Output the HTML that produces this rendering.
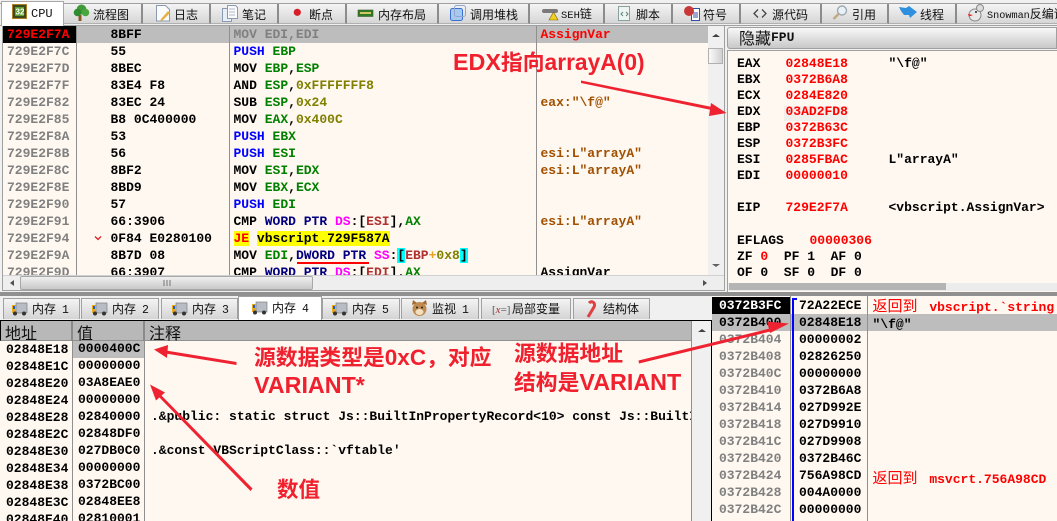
<!DOCTYPE html>
<html><head><meta charset="utf-8"><style>
html,body{margin:0;padding:0}
body{width:1057px;height:521px;overflow:hidden;position:relative;background:#f0f0f0;font-family:"Liberation Mono","WenQuanYi Zen Hei",monospace}
div{position:absolute;box-sizing:border-box}
svg{position:absolute;overflow:visible}
pre{position:absolute;margin:0;font:bold 13px/17px "Liberation Mono",monospace;white-space:pre;color:#000}
.tab{top:4px;height:20px;background:linear-gradient(#f4f4f4,#d6d6d6);border-right:2px solid #8c8c8c;border-bottom:1px solid #b0b0b0}
.btab{top:298px;height:21px;background:linear-gradient(#f4f4f4,#d4d4d4);border:1px solid #a0a0a0;border-bottom:0}
.l{position:absolute;white-space:pre;font:12px/18px "Liberation Mono","WenQuanYi Zen Hei","Noto Sans CJK SC",monospace;color:#111}
.l i{font-style:normal;margin-left:6px;font-size:11.5px}
.h{position:absolute;white-space:pre;font:16px/20px "WenQuanYi Zen Hei","Noto Sans CJK SC",sans-serif;color:#111}
.a{position:absolute;white-space:pre;font:bold 21.8px/28px "Liberation Sans","Noto Sans CJK SC",sans-serif;color:#f0202e}
.a b{font-size:23.3px}
.g{color:#808080}.b{color:#0000ff}.n{color:#008000}.o{color:#808000}.m{color:#ff00ff}.r{color:#b03030}.d{color:#000080}.c{color:#a05000}.e{color:#ff0000}
.cy{background:#00ffff}.y{background:#ffff00}
.cjk{font:15px/17px "WenQuanYi Zen Hei","Noto Sans CJK SC",sans-serif;color:#ff0000;margin-right:4px}
</style></head><body>

<!-- top tab strip -->
<div style="left:0;top:3px;width:1057px;height:1px;background:#a0a0a0"></div>
<div style="left:0;top:25px;width:1057px;height:1px;background:#a0a0a0"></div>
<div class="tab" style="left:64px;width:79px"></div>
<div class="tab" style="left:143px;width:68px"></div>
<div class="tab" style="left:211px;width:68px"></div>
<div class="tab" style="left:279px;width:68px"></div>
<div class="tab" style="left:347px;width:92px"></div>
<div class="tab" style="left:439px;width:91px"></div>
<div class="tab" style="left:530px;width:75px"></div>
<div class="tab" style="left:605px;width:68px"></div>
<div class="tab" style="left:673px;width:68px"></div>
<div class="tab" style="left:741px;width:81px"></div>
<div class="tab" style="left:822px;width:67px"></div>
<div class="tab" style="left:889px;width:68px"></div>
<div class="tab" style="left:957px;width:100px;border-right:0"></div>
<div style="left:1px;top:1px;width:63px;height:25px;background:#fff;border:1px solid #a8a8a8;border-bottom:0"></div>

<span class="l" style="left:31px;top:5px">CPU</span>
<span class="l" style="left:93px;top:7px">流程图</span>
<span class="l" style="left:174px;top:7px">日志</span>
<span class="l" style="left:242px;top:7px">笔记</span>
<span class="l" style="left:309px;top:7px">断点</span>
<span class="l" style="left:378px;top:7px">内存布局</span>
<span class="l" style="left:470px;top:7px">调用堆栈</span>
<span class="l" style="left:561px;top:6px"><span style="font-size:10.5px">SEH</span>链</span>
<span class="l" style="left:636px;top:7px">脚本</span>
<span class="l" style="left:703px;top:7px">符号</span>
<span class="l" style="left:772px;top:7px">源代码</span>
<span class="l" style="left:852px;top:7px">引用</span>
<span class="l" style="left:920px;top:7px">线程</span>
<span class="l" style="left:987px;top:6px"><span style="font-size:10.2px">Snowman</span>反编译</span>

<!-- top icons -->
<svg style="left:0;top:0" width="1057" height="26" viewBox="0 0 1057 26">
<rect x="12.5" y="4.5" width="14" height="14" fill="#3a4a20" stroke="#b08020"/><rect x="15" y="7" width="9" height="9" fill="#60a030"/>
<text x="15.5" y="14.5" font-size="8" font-weight="bold" fill="#fff" font-family="Liberation Sans">32</text>
<path d="M80 21v-6" stroke="#8a5a20" stroke-width="3"/><circle cx="81.5" cy="9.5" r="5" fill="#3f9a3a"/><circle cx="77.5" cy="12.5" r="3.8" fill="#2f8a30"/><circle cx="85.5" cy="12.5" r="3.8" fill="#4aa63f"/>
<path d="M156.5 5.5h9l4 4v11.5h-13z" fill="#fbfbfb" stroke="#8a9ab0"/><path d="M161 19l7-8 2 2-7 7-3 1z" fill="#e8b040"/>
<path d="M222.5 8.5h9v13h-9z" fill="#e8eef5" stroke="#8a9ab0"/><path d="M227.5 5.5h8l2 2v11h-10z" fill="#fbfbfb" stroke="#8a9ab0"/><path d="M229 9h6m-6 3h6m-6 3h6" stroke="#b0b8c8"/>
<circle cx="297.3" cy="12.3" r="3.6" fill="#d81e28"/>
<rect x="358" y="10" width="15" height="6.5" fill="#2f7a2a" stroke="#3d5a2a" stroke-width=".6"/><path d="M360 12h11v2h-11z" fill="#d0c860"/>
<rect x="450.5" y="8.5" width="12" height="12" fill="#a8c8f0" stroke="#3a70d0" rx="2"/><rect x="454.5" y="5.5" width="11" height="11" fill="none" stroke="#90a8d0" rx="2"/>
<path d="M544 11h12" stroke="#7a7a7a" stroke-width="4" stroke-linecap="round"/><path d="M549 20l4.500-8 4.500 8z" fill="#f0d020" stroke="#806000" stroke-width=".6"/>
<path d="M618.5 6.5h11v14h-11z" fill="#eef4f0" stroke="#8aa0a0"/><path d="M623 12l-2 2 2 2m3-4l2 2-2 2" stroke="#608080" fill="none"/>
<path d="M691.5 8.5h8v12h-8z" fill="#fff" stroke="#3050a0"/><path d="M693 13h5m-5 2h5m-5 2h5" stroke="#3050a0"/><circle cx="689" cy="11" r="5" fill="#c83838"/>
<path d="M758 9.5l-4 4 4 4M762 9.5l4 4-4 4" stroke="#444" fill="none" stroke-width="1.3"/>
<circle cx="842" cy="10.5" r="4.5" fill="#e8f0f8" stroke="#a0a8b0" stroke-width="1.4"/><path d="M838.5 14l-5 5" stroke="#c0a880" stroke-width="2.4"/>
<path d="M899 7l7 1 3-2 8 6-7 6-1-3-5 0-3-4z" fill="#3090e0"/>
<circle cx="975" cy="15" r="6" fill="#e8e8e8" stroke="#888"/><circle cx="980" cy="8" r="3.5" fill="#ddd" stroke="#888"/><path d="M968 14l5 1-4 1.500z" fill="#e02020"/><circle cx="976" cy="12" r="1" fill="#222"/>
</svg>

<!-- Disassembly pane -->
<div style="left:2px;top:26px;width:723px;height:265px;background:#fff8f0;border:1px solid #a0a0a0;border-top:0;overflow:hidden">
  <div style="left:0;top:0;width:100%;height:17px;background:#bdbdbd"></div>
  <div style="left:0;top:0;width:74px;height:17px;background:#000"></div>
  <div style="left:73px;top:0;width:1px;height:100%;background:#909090"></div>
  <div style="left:226px;top:0;width:1px;height:100%;background:#909090"></div>
  <div style="left:533px;top:0;width:1px;height:100%;background:#909090"></div>
  <pre style="left:4px;top:0" class="g"><span class="e">729E2F7A</span>
729E2F7C
729E2F7D
729E2F7F
729E2F82
729E2F85
729E2F8A
729E2F8B
729E2F8C
729E2F8E
729E2F90
729E2F91
729E2F94
729E2F9A
729E2F9D</pre>
  <pre style="left:107.5px;top:0">8BFF
55
8BEC
83E4 F8
83EC 24
B8 0C400000
53
56
8BF2
8BD9
57
66:3906
0F84 E0280100
8B7D 08
66:3907</pre>
  <pre style="left:230.5px;top:0"><span class="g">MOV EDI,EDI</span>
<span class="b">PUSH</span> <span class="n">EBP</span>
MOV <span class="n">EBP</span>,<span class="n">ESP</span>
AND <span class="n">ESP</span>,<span class="o">0xFFFFFFF8</span>
SUB <span class="n">ESP</span>,<span class="o">0x24</span>
MOV <span class="n">EAX</span>,<span class="o">0x400C</span>
<span class="b">PUSH</span> <span class="n">EBX</span>
<span class="b">PUSH</span> <span class="n">ESI</span>
MOV <span class="n">ESI</span>,<span class="n">EDX</span>
MOV <span class="n">EBX</span>,<span class="n">ECX</span>
<span class="b">PUSH</span> <span class="n">EDI</span>
CMP <span class="d">WORD PTR</span> <span class="m">DS</span>:[<span class="r">ESI</span>],<span class="n">AX</span>
<span class="y e">JE</span> <span class="y">vbscript.729F587A</span>
MOV <span class="n">EDI</span>,<span class="d">DWORD PTR</span> <span class="m">SS</span>:<span class="cy">[</span><span class="r">EBP</span><span style="color:#e8a020">+</span><span class="o">0x8</span><span class="cy">]</span>
CMP <span class="d">WORD PTR</span> <span class="m">DS</span>:[<span class="r">EDI</span>],<span class="n">AX</span></pre>
  <div style="left:294px;top:236px;width:72px;height:2px;background:#ff0000"></div>
  <pre style="left:537.5px;top:0" class="c"><span class="e">AssignVar</span>



eax:"\f@"


esi:L"arrayA"
esi:L"arrayA"


esi:L"arrayA"


<span style="color:#000">AssignVar</span></pre>
  <svg style="left:0;top:0" width="120" height="240"><path d="M92 210.5l3 3 3-3" stroke="#e02020" fill="none" stroke-width="1.3"/></svg>
  <!-- vertical scrollbar -->
  <div style="left:705px;top:0;width:16px;height:250px;background:#f0f0f0"></div>
  <div style="left:705px;top:22px;width:15px;height:16px;background:linear-gradient(90deg,#fafafa,#d0d0d0);border:1px solid #b0b0b0"></div>
  <svg style="left:705px;top:0" width="16" height="250"><path d="M4 11l4-3 4 3z" fill="#404040"/><path d="M4 238h8l-4 3z" fill="#606060"/></svg>
  <!-- h scrollbar -->
  <div style="left:0;top:249px;width:721px;height:16px;background:#eeeeee;border-top:1px solid #d0d0d0"></div>
  <div style="left:17px;top:250px;width:293px;height:14px;background:linear-gradient(#f0f0f0,#c8c8c8);border:1px solid #a8a8a8;border-radius:2px"></div>
  <svg style="left:0;top:249px" width="721" height="16"><path d="M11 5v6l-4-3z" fill="#505050"/><path d="M161 5v6m3-6v6m3-6v6" stroke="#777"/><path d="M700 5v6l4-3z" fill="#505050"/></svg>
</div>

<!-- Right registers pane -->
<div style="left:727px;top:27px;width:330px;height:22px;background:linear-gradient(#f8f8f8,#c8c8c8);border:1px solid #a0a0a0;border-radius:3px 0 0 3px"></div>
<span class="h" style="left:739px;top:27px">隐藏</span>
<span class="h" style="left:771px;top:28px;font:bold 13px/20px 'Liberation Mono',monospace">FPU</span>
<div style="left:727px;top:50px;width:330px;height:243px;background:#fff8f0;border:1px solid #a0a0a0;border-right:0;overflow:hidden">
  <div style="left:56px;top:55px;width:64px;height:15px;background:#f0efeb"></div>
  <pre style="left:9px;top:5px;line-height:16px">EAX
EBX
ECX
EDX
EBP
ESP
ESI
EDI

EIP</pre>
  <pre style="left:57.5px;top:5px;line-height:16px" class="e">02848E18
0372B6A8
0284E820
03AD2FD8
0372B63C
0372B3FC
0285FBAC
00000010

729E2F7A</pre>
  <pre style="left:160.5px;top:5px;line-height:16px">"\f@"





L"arrayA"


&lt;vbscript.AssignVar&gt;</pre>
  <pre style="left:9px;top:182px;line-height:16px">EFLAGS
ZF <span class="e">0</span>  PF 1  AF 0
OF 0  SF 0  DF 0</pre>
  <pre style="left:81.5px;top:182px;line-height:16px" class="e">00000306</pre>
  <div style="left:0;top:232px;width:330px;height:8px;background:#ececec"></div>
  <div style="left:1px;top:232px;width:217px;height:7px;background:#b4b4b4"></div>
</div>

<!-- Splitter -->
<div style="left:0;top:292px;width:1057px;height:4px;background:#909090"></div>
<div style="left:0;top:296px;width:711px;height:24px;background:#f0f0f0"></div>

<!-- bottom tabs -->
<div class="btab" style="left:3px;width:77px"></div>
<div class="btab" style="left:81px;width:78px"></div>
<div class="btab" style="left:161px;width:77px"></div>
<div class="btab" style="left:322px;width:78px"></div>
<div class="btab" style="left:401px;width:78px"></div>
<div class="btab" style="left:481px;width:90px"></div>
<div class="btab" style="left:573px;width:77px"></div>
<div style="left:238px;top:296px;width:84px;height:25px;background:#fff;border:1px solid #a0a0a0;border-bottom:0"></div>
<span class="l" style="left:32px;top:301px">内存<i>1</i></span>
<span class="l" style="left:112px;top:301px">内存<i>2</i></span>
<span class="l" style="left:192px;top:301px">内存<i>3</i></span>
<span class="l" style="left:272px;top:300px">内存<i>4</i></span>
<span class="l" style="left:352px;top:301px">内存<i>5</i></span>
<span class="l" style="left:432px;top:301px">监视<i>1</i></span>
<span class="l" style="left:512px;top:301px">局部变量</span>
<span class="l" style="left:603px;top:301px">结构体</span>
<svg style="left:0;top:296px" width="711" height="24" viewBox="0 0 711 24">
<g><rect x="16" y="7" width="11" height="10" fill="#b8bcc4" stroke="#707070" stroke-width=".6"/><rect x="12" y="9" width="4" height="8" fill="#e8a820"/><rect x="13" y="10" width="2" height="3" fill="#2060c0"/><circle cx="15" cy="17.5" r="2" fill="#333"/><circle cx="24" cy="17.5" r="2" fill="#333"/></g>
<g transform="translate(80,0)"><rect x="16" y="7" width="11" height="10" fill="#b8bcc4" stroke="#707070" stroke-width=".6"/><rect x="12" y="9" width="4" height="8" fill="#e8a820"/><rect x="13" y="10" width="2" height="3" fill="#2060c0"/><circle cx="15" cy="17.5" r="2" fill="#333"/><circle cx="24" cy="17.5" r="2" fill="#333"/></g>
<g transform="translate(160,0)"><rect x="16" y="7" width="11" height="10" fill="#b8bcc4" stroke="#707070" stroke-width=".6"/><rect x="12" y="9" width="4" height="8" fill="#e8a820"/><rect x="13" y="10" width="2" height="3" fill="#2060c0"/><circle cx="15" cy="17.5" r="2" fill="#333"/><circle cx="24" cy="17.5" r="2" fill="#333"/></g>
<g transform="translate(240,-1)"><rect x="16" y="7" width="11" height="10" fill="#b8bcc4" stroke="#707070" stroke-width=".6"/><rect x="12" y="9" width="4" height="8" fill="#e8a820"/><rect x="13" y="10" width="2" height="3" fill="#2060c0"/><circle cx="15" cy="17.5" r="2" fill="#333"/><circle cx="24" cy="17.5" r="2" fill="#333"/></g>
<g transform="translate(320,0)"><rect x="16" y="7" width="11" height="10" fill="#b8bcc4" stroke="#707070" stroke-width=".6"/><rect x="12" y="9" width="4" height="8" fill="#e8a820"/><rect x="13" y="10" width="2" height="3" fill="#2060c0"/><circle cx="15" cy="17.5" r="2" fill="#333"/><circle cx="24" cy="17.5" r="2" fill="#333"/></g>
<circle cx="419.5" cy="13" r="7" fill="#c08a50"/><path d="M412 9l1-5 4 3zM427 9l-1-5-4 3z" fill="#a06a30"/><ellipse cx="419.5" cy="16" rx="4" ry="3" fill="#f0e0c0"/><circle cx="417" cy="11.5" r="1" fill="#222"/><circle cx="422" cy="11.5" r="1" fill="#222"/>
<text x="492" y="17" font-size="11" fill="#555" font-family="Liberation Serif">[<tspan fill="#a03030" font-style="italic">x</tspan>=]</text>
<path d="M588 21l6-10c2-4-2-7-5-4" stroke="#e04040" fill="none" stroke-width="3"/>
</svg>

<!-- Memory pane -->
<div style="left:0;top:320px;width:712px;height:201px;background:#fff8f0;border-top:1px solid #000;border-right:1px solid #000;overflow:hidden">
  <div style="left:0;top:0;width:691px;height:20px;background:#b8b8b8;border-bottom:1px solid #909090;border-left:1px solid #000"></div>
  <div style="left:71px;top:0;width:2px;height:20px;background:#8a8a8a"></div>
  <div style="left:143px;top:0;width:2px;height:20px;background:#8a8a8a"></div>
  <div style="left:72px;top:20px;width:1px;height:181px;background:#909090"></div>
  <div style="left:144px;top:20px;width:1px;height:181px;background:#909090"></div>
  <div style="left:73px;top:20px;width:71px;height:17px;background:#bdbdbd"></div>
  <span class="h" style="left:5px;top:1px">地址</span>
  <span class="h" style="left:77px;top:1px">值</span>
  <span class="h" style="left:149px;top:1px">注释</span>
  <pre style="left:6px;top:20px">02848E18
02848E1C
02848E20
02848E24
02848E28
02848E2C
02848E30
02848E34
02848E38
02848E3C
02848E40</pre>
  <pre style="left:78px;top:19px">0000400C
00000000
03A8EAE0
00000000
02840000
02848DF0
027DB0C0
00000000
0372BC00
02848EE8
02810001</pre>
  <pre style="left:151px;top:87px;width:540px;overflow:hidden">.&amp;public: static struct Js::BuiltInPropertyRecord&lt;10&gt; const Js::BuiltIn

.&amp;const VBScriptClass::`vftable'</pre>
  <div style="left:691px;top:0;width:20px;height:201px;background:#f0f0f0;border-left:1px solid #909090"></div>
  <svg style="left:691px;top:0" width="20" height="20"><path d="M7 11l4-3 4 3z" fill="#404040"/></svg>
</div>

<!-- Stack pane -->
<div style="left:712px;top:296px;width:345px;height:225px;background:#fff8f0;overflow:hidden">
  <div style="left:0;top:18px;width:345px;height:17px;background:#bdbdbd"></div>
  <div style="left:0;top:1px;width:78px;height:17px;background:#000"></div>
  <div style="left:78px;top:0;width:1px;height:225px;background:#909090"></div>
  <div style="left:155px;top:0;width:1px;height:225px;background:#909090"></div>
  <div style="left:80px;top:2px;width:2px;height:223px;background:#0000ff"></div>
  <div style="left:80px;top:2px;width:5px;height:2px;background:#0000ff"></div>
  <pre style="left:7px;top:1px" class="g"><span style="color:#fff">0372B3FC</span>
<span style="color:#000">0372B400</span>
0372B404
0372B408
0372B40C
0372B410
0372B414
0372B418
0372B41C
0372B420
0372B424
0372B428
0372B42C</pre>
  <pre style="left:87px;top:1px">72A22ECE
02848E18
00000002
02826250
00000000
0372B6A8
027D992E
027D9910
027D9908
0372B46C
756A98CD
004A0000
00000000</pre>
  <pre style="left:160.5px;top:1px"><span class="e"><span class="cjk">返回到</span> vbscript.`string</span>
"\f@"








<span class="e"><span class="cjk">返回到</span> msvcrt.756A98CD</span>


<span class="e"><span class="cjk">返回到</span></span></pre>
</div>

<!-- Annotations -->
<span class="a" style="left:453px;top:48px"><b>EDX</b>指向<b style="font-size:22.8px">arrayA(0)</b></span>
<span class="a" style="left:254px;top:344px">源数据类型是<b style="font-size:22.5px">0xC</b>，对应</span>
<span class="a" style="left:254px;top:371px"><b>VARIANT*</b></span>
<span class="a" style="left:514px;top:340px">源数据地址</span>
<span class="a" style="left:514px;top:368px">结构是<b>VARIANT</b></span>
<span class="a" style="left:277px;top:476px;font-size:21.5px">数值</span>
<svg style="left:0;top:0;pointer-events:none" width="1057" height="521" viewBox="0 0 1057 521">
<g fill="#ee2230" stroke="none">
<path d="M581 80.5L712 107l-.5 3L581 83z"/><path d="M726.5 113L711 103l-2 13z"/>
<path d="M236.5 362L166 350.5l-.5 3L236.5 365z"/><path d="M154 349.5L168 345l-1 13z"/>
<path d="M252.5 488.5L160 394l-2 2 92.5 95z"/><path d="M150 384.5l15 8-9 8z"/>
<path d="M638.5 360.5L772 328l.5 3L639 363.5z"/><path d="M789 323.5L767 321.5l3 11.500z"/>
</g>
</svg>
</body></html>
